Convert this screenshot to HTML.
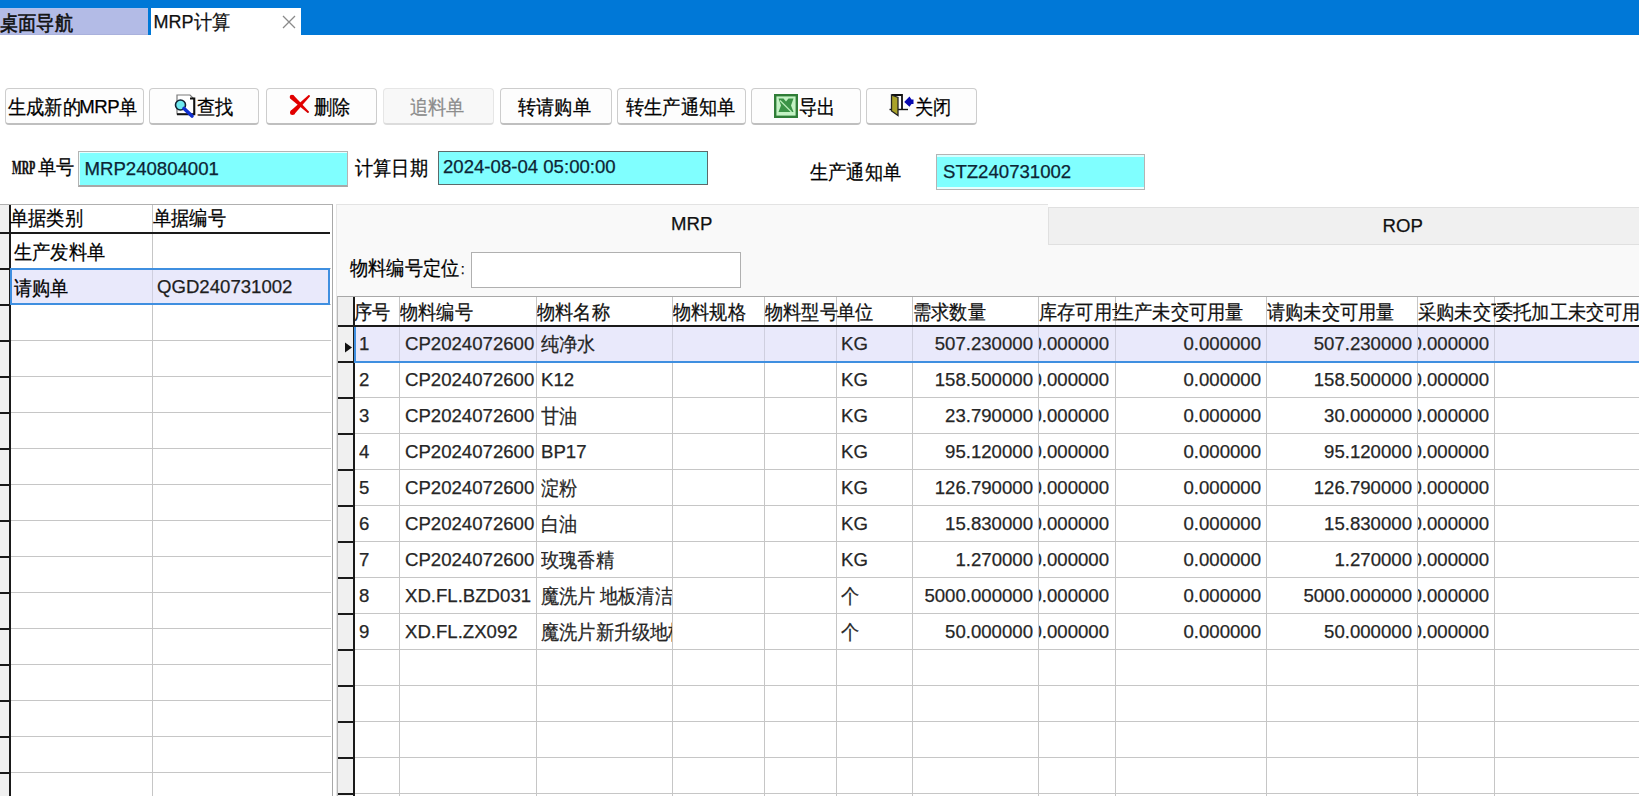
<!DOCTYPE html><html><head><meta charset="utf-8"><style>
*{box-sizing:border-box;margin:0;padding:0}
html,body{width:1639px;height:796px;overflow:hidden;background:#fff;font-family:"Liberation Sans",sans-serif;color:#000;-webkit-text-stroke:0.25px currentColor}
body{position:relative}
.a{position:absolute}
.t{position:absolute;white-space:nowrap;line-height:20px;height:20px;font-size:18.6px}
.z{display:inline-block;font-size:20px;transform:scaleX(.91);transform-origin:0 0;vertical-align:-1px}
.btn{position:absolute;top:88px;height:37px;border:1px solid #cdcdcd;border-bottom:2px solid #bfbfbf;border-radius:4px;background:#fdfdfd}
.btn.dis{border-color:#e6e6e6;border-bottom-color:#dcdcdc;background:#f8f8f8}
.inp{position:absolute;background:#80ffff}
.vl{position:absolute;width:1px;background:#c6c6c6}
.hl{position:absolute;height:1px;background:#c6c6c6}
.cell{position:absolute;white-space:nowrap;overflow:hidden;line-height:20px;height:20px;font-size:18.6px;color:#262626}
.r{display:flex;justify-content:flex-end}
</style></head><body>
<div class="a" style="left:0;top:0;width:1639px;height:35px;background:#0078d7"></div>
<div class="a" style="left:0;top:8px;width:148px;height:27px;background:#b3bbe6;border-bottom:1px solid #a9b1dc;border-top:1px solid #adc2ee"></div>
<div class="t" style="left:0px;top:12.5px;-webkit-text-stroke:0.6px #101010;color:#101010"><span class="z" style="margin-right:-8.8px">桌面导航</span></div>
<div class="a" style="left:151px;top:8px;width:150px;height:27px;background:#fff"></div>
<div class="t" style="left:153.5px;top:12px;color:#111;font-size:18px">MRP<span class="z" style="margin-right:-4.4px">计算</span></div>
<svg class="a" style="left:282px;top:15px" width="14" height="14" viewBox="0 0 14 14"><path d="M1 1L13 13M13 1L1 13" stroke="#8a8a8a" stroke-width="1.3" fill="none"/></svg>
<div class="btn" style="left:5px;width:139px"></div>
<div class="t" style="left:8px;top:97px"><span class="z" style="margin-right:-8.8px">生成新的</span><span style="letter-spacing:-0.4px">MRP</span><span class="z" style="margin-right:-2.2px">单</span></div>
<div class="btn" style="left:149px;width:110px"></div>
<svg class="a" style="left:174px;top:93px" width="22" height="26" viewBox="0 0 22 26">
<path d="M3 2H16L20 6V21H3Z" fill="#fff" stroke="#7a7a7a" stroke-width="1.2"/>
<path d="M16 5.5H20.3V21.3H3" fill="none" stroke="#111" stroke-width="2"/>
<circle cx="6.5" cy="12" r="5" fill="#6fe9ef" stroke="#123" stroke-width="1.6"/>
<path d="M10 15.5L18 23" stroke="#1030d0" stroke-width="3.6" stroke-linecap="round"/>
</svg>
<div class="t" style="left:197px;top:97px"><span class="z" style="margin-right:-4.4px">查找</span></div>
<div class="btn" style="left:266px;width:111px"></div>
<svg class="a" style="left:285px;top:90px" width="30" height="30" viewBox="0 0 30 30">
<path d="M5.43 8.68L22.38 22.66L23.62 21.34L8.57 5.32Z" fill="#e10000"/><circle cx="7" cy="7" r="2.3" fill="#e10000"/><circle cx="23" cy="22" r="0.9" fill="#c00000"/>
<path d="M23.36 5.36L5.73 20.73L9.27 24.27L24.64 6.64Z" fill="#e10000"/><circle cx="7.5" cy="22.5" r="2.5" fill="#e10000"/><circle cx="24" cy="6" r="0.9" fill="#e10000"/>
</svg>
<div class="t" style="left:314px;top:97px"><span class="z" style="margin-right:-4.4px">删除</span></div>
<div class="btn dis" style="left:383px;width:111px"></div>
<div class="t" style="left:410px;top:97px;color:#8c8c8c"><span class="z" style="margin-right:-6.6px">追料单</span></div>
<div class="btn" style="left:500px;width:112px"></div>
<div class="t" style="left:518px;top:97px"><span class="z" style="margin-right:-8.8px">转请购单</span></div>
<div class="btn" style="left:617px;width:129px"></div>
<div class="t" style="left:626px;top:97px"><span class="z" style="margin-right:-13.2px">转生产通知单</span></div>
<div class="btn" style="left:751px;width:110px"></div>
<svg class="a" style="left:774px;top:94px" width="24" height="24" viewBox="0 0 24 24">
<rect x="1.2" y="1.2" width="21.6" height="21.6" fill="#c4f2c4" stroke="#2f7d37" stroke-width="2.4"/>
<path d="M4.5 4.5H9.5L12 7.5L14.5 4.5H19.5L17 11.5L19.5 18H4.5L7 11.5Z" fill="#3b9346"/>
<path d="M6 6.5L17.5 18" stroke="#b8ecb8" stroke-width="1.3"/>
<rect x="3.5" y="18.3" width="17" height="2" fill="#c4f2c4"/>
</svg>
<div class="t" style="left:798.5px;top:97px"><span class="z" style="margin-right:-4.4px">导出</span></div>
<div class="btn" style="left:866px;width:111px"></div>
<svg class="a" style="left:889px;top:93px" width="26" height="24" viewBox="0 0 26 24">
<path d="M2.5 2H13V16.5" fill="none" stroke="#111" stroke-width="1.8"/>
<path d="M0.5 16.5H19" stroke="#111" stroke-width="1.4"/>
<path d="M2.5 2L9 4.5V22.5L2.5 18Z" fill="#a9a22a" stroke="#222" stroke-width="1.3"/>
<path d="M15.2 9L20.5 3.6L22.5 6.5H24.5V11H22.5L20.5 13.8Z" fill="#0a0ab0"/>
</svg>
<div class="t" style="left:914.5px;top:97px"><span class="z" style="margin-right:-4.4px">关闭</span></div>
<div class="t" style="left:11.5px;top:158px;font-family:'Liberation Serif',serif;font-size:19px;font-weight:bold;color:#111;-webkit-text-stroke:0.5px #111;transform:scaleX(0.54);transform-origin:0 0">MRP</div>
<div class="t" style="left:37.5px;top:157px"><span class="z" style="margin-right:-4.4px">单号</span></div>
<div class="inp" style="left:78px;top:151px;width:270px;height:36px;border:1px solid #b4b4b4;border-bottom:2px solid #a8a8a8;box-shadow:inset 1px 1px 0 #e8ffff"></div>
<div class="t" style="left:84.5px;top:158.5px;color:#0d2535">MRP240804001</div>
<div class="t" style="left:355px;top:157.5px"><span class="z" style="margin-right:-8.8px">计算日期</span></div>
<div class="inp" style="left:438px;top:151px;width:270px;height:34px;border:1px solid #5c6a6a"></div>
<div class="t" style="left:443px;top:157px;color:#0d2535">2024-08-04 05:00:00</div>
<div class="t" style="left:810px;top:162px"><span class="z" style="margin-right:-11.0px">生产通知单</span></div>
<div class="inp" style="left:936px;top:154px;width:209px;height:36px;border:1px solid #b4b4b4;box-shadow:inset 0 2px 0 #d8ffff,inset 0 -2px 0 #e8ffff"></div>
<div class="t" style="left:943px;top:162px;color:#0d2535">STZ240731002</div>
<div class="a" style="left:0;top:204px;width:333px;height:600px;border-top:1px solid #b0b0b0;border-right:1px solid #a8a8a8;background:#fff"></div>
<div class="a" style="left:0;top:205px;width:9px;height:600px;background:#f0f0f0"></div>
<div class="a" style="left:9px;top:205px;width:2px;height:600px;background:#1a1a1a"></div>
<div class="vl" style="left:152px;top:205px;height:600px"></div>
<div class="hl" style="left:11px;top:268px;width:320px"></div>
<div class="hl" style="left:11px;top:304px;width:320px"></div>
<div class="hl" style="left:11px;top:340px;width:320px"></div>
<div class="hl" style="left:11px;top:376px;width:320px"></div>
<div class="hl" style="left:11px;top:412px;width:320px"></div>
<div class="hl" style="left:11px;top:448px;width:320px"></div>
<div class="hl" style="left:11px;top:484px;width:320px"></div>
<div class="hl" style="left:11px;top:520px;width:320px"></div>
<div class="hl" style="left:11px;top:556px;width:320px"></div>
<div class="hl" style="left:11px;top:592px;width:320px"></div>
<div class="hl" style="left:11px;top:628px;width:320px"></div>
<div class="hl" style="left:11px;top:664px;width:320px"></div>
<div class="hl" style="left:11px;top:700px;width:320px"></div>
<div class="hl" style="left:11px;top:736px;width:320px"></div>
<div class="hl" style="left:11px;top:772px;width:320px"></div>
<div class="hl" style="left:11px;top:808px;width:320px"></div>
<div class="a" style="left:0;top:232px;width:9px;height:2px;background:#1a1a1a"></div>
<div class="a" style="left:0;top:268px;width:9px;height:2px;background:#1a1a1a"></div>
<div class="a" style="left:0;top:304px;width:9px;height:2px;background:#1a1a1a"></div>
<div class="a" style="left:0;top:340px;width:9px;height:2px;background:#1a1a1a"></div>
<div class="a" style="left:0;top:376px;width:9px;height:2px;background:#1a1a1a"></div>
<div class="a" style="left:0;top:412px;width:9px;height:2px;background:#1a1a1a"></div>
<div class="a" style="left:0;top:448px;width:9px;height:2px;background:#1a1a1a"></div>
<div class="a" style="left:0;top:484px;width:9px;height:2px;background:#1a1a1a"></div>
<div class="a" style="left:0;top:520px;width:9px;height:2px;background:#1a1a1a"></div>
<div class="a" style="left:0;top:556px;width:9px;height:2px;background:#1a1a1a"></div>
<div class="a" style="left:0;top:592px;width:9px;height:2px;background:#1a1a1a"></div>
<div class="a" style="left:0;top:628px;width:9px;height:2px;background:#1a1a1a"></div>
<div class="a" style="left:0;top:664px;width:9px;height:2px;background:#1a1a1a"></div>
<div class="a" style="left:0;top:700px;width:9px;height:2px;background:#1a1a1a"></div>
<div class="a" style="left:0;top:736px;width:9px;height:2px;background:#1a1a1a"></div>
<div class="a" style="left:0;top:772px;width:9px;height:2px;background:#1a1a1a"></div>
<div class="a" style="left:0;top:808px;width:9px;height:2px;background:#1a1a1a"></div>
<div class="a" style="left:9px;top:232px;width:321px;height:2px;background:#1a1a1a"></div>
<div class="t" style="left:9.5px;top:208px"><span class="z" style="margin-right:-8.8px">单据类别</span></div>
<div class="t" style="left:153px;top:208px"><span class="z" style="margin-right:-8.8px">单据编号</span></div>
<div class="t" style="left:14px;top:242px"><span class="z" style="margin-right:-11.0px">生产发料单</span></div>
<div class="a" style="left:10px;top:268px;width:320px;height:37px;background:#e9e9fb;border:2px solid #3f8fe0"></div>
<div class="vl" style="left:152px;top:270px;height:33px;background:#cfcfdf"></div>
<div class="t" style="left:14px;top:278px"><span class="z" style="margin-right:-6.6px">请购单</span></div>
<div class="t" style="left:157px;top:277px;color:#1e1e1e">QGD240731002</div>
<div class="a" style="left:336px;top:204px;width:1303px;height:600px;background:#f9f9f9;border-left:1px solid #e6e6e6;border-top:1px solid #e3e3e3"></div>
<div class="a" style="left:1048px;top:203px;width:591px;height:4px;background:#fff"></div>
<div class="a" style="left:1048px;top:207px;width:591px;height:38px;background:#f0f0f0;border:1px solid #e0e0e0;border-right:none"></div>
<div class="t" style="left:671px;top:214px;color:#111">MRP</div>
<div class="t" style="left:1382.5px;top:215.5px;color:#111">ROP</div>
<div class="t" style="left:350px;top:258px"><span class="z" style="margin-right:-13.2px">物料编号定位</span><span style="letter-spacing:0;font-size:14px;margin-left:4px">:</span></div>
<div class="a" style="left:471px;top:252px;width:270px;height:36px;background:#fff;border:1.5px solid #b0b0b0"></div>
<div class="a" style="left:337px;top:296px;width:1302px;height:510px;background:#fff;border-top:1px solid #a8a8a8;border-left:1px solid #b8b8b8"></div>
<div class="a" style="left:338px;top:297px;width:15px;height:510px;background:#f0f0f0"></div>
<div class="a" style="left:353px;top:297px;width:2px;height:510px;background:#1a1a1a"></div>
<div class="vl" style="left:399px;top:297px;height:510px"></div>
<div class="vl" style="left:536px;top:297px;height:510px"></div>
<div class="vl" style="left:672px;top:297px;height:510px"></div>
<div class="vl" style="left:764px;top:297px;height:510px"></div>
<div class="vl" style="left:836px;top:297px;height:510px"></div>
<div class="vl" style="left:912px;top:297px;height:510px"></div>
<div class="vl" style="left:1038px;top:297px;height:510px"></div>
<div class="vl" style="left:1115px;top:297px;height:510px"></div>
<div class="vl" style="left:1266px;top:297px;height:510px"></div>
<div class="vl" style="left:1417px;top:297px;height:510px"></div>
<div class="vl" style="left:1494px;top:297px;height:510px"></div>
<div class="a" style="left:353px;top:325px;width:1286px;height:2px;background:#1a1a1a"></div>
<div class="a" style="left:338px;top:325px;width:15px;height:2px;background:#1a1a1a"></div>
<div class="a" style="left:338px;top:361px;width:15px;height:2px;background:#1a1a1a"></div>
<div class="a" style="left:338px;top:397px;width:15px;height:2px;background:#1a1a1a"></div>
<div class="a" style="left:338px;top:433px;width:15px;height:2px;background:#1a1a1a"></div>
<div class="a" style="left:338px;top:469px;width:15px;height:2px;background:#1a1a1a"></div>
<div class="a" style="left:338px;top:505px;width:15px;height:2px;background:#1a1a1a"></div>
<div class="a" style="left:338px;top:541px;width:15px;height:2px;background:#1a1a1a"></div>
<div class="a" style="left:338px;top:577px;width:15px;height:2px;background:#1a1a1a"></div>
<div class="a" style="left:338px;top:613px;width:15px;height:2px;background:#1a1a1a"></div>
<div class="a" style="left:338px;top:649px;width:15px;height:2px;background:#1a1a1a"></div>
<div class="a" style="left:338px;top:685px;width:15px;height:2px;background:#1a1a1a"></div>
<div class="a" style="left:338px;top:721px;width:15px;height:2px;background:#1a1a1a"></div>
<div class="a" style="left:338px;top:757px;width:15px;height:2px;background:#1a1a1a"></div>
<div class="a" style="left:338px;top:793px;width:15px;height:2px;background:#1a1a1a"></div>
<div class="hl" style="left:355px;top:361px;width:1284px"></div>
<div class="hl" style="left:355px;top:397px;width:1284px"></div>
<div class="hl" style="left:355px;top:433px;width:1284px"></div>
<div class="hl" style="left:355px;top:469px;width:1284px"></div>
<div class="hl" style="left:355px;top:505px;width:1284px"></div>
<div class="hl" style="left:355px;top:541px;width:1284px"></div>
<div class="hl" style="left:355px;top:577px;width:1284px"></div>
<div class="hl" style="left:355px;top:613px;width:1284px"></div>
<div class="hl" style="left:355px;top:649px;width:1284px"></div>
<div class="hl" style="left:355px;top:685px;width:1284px"></div>
<div class="hl" style="left:355px;top:721px;width:1284px"></div>
<div class="hl" style="left:355px;top:757px;width:1284px"></div>
<div class="hl" style="left:355px;top:793px;width:1284px"></div>
<div class="a" style="left:354px;top:327px;width:1290px;height:36px;background:#e9e9fb;border:2px solid #3f8fe0;border-top:none"></div>
<div class="vl" style="left:399px;top:327px;height:34px;background:#cfcfdf"></div>
<div class="vl" style="left:536px;top:327px;height:34px;background:#cfcfdf"></div>
<div class="vl" style="left:672px;top:327px;height:34px;background:#cfcfdf"></div>
<div class="vl" style="left:764px;top:327px;height:34px;background:#cfcfdf"></div>
<div class="vl" style="left:836px;top:327px;height:34px;background:#cfcfdf"></div>
<div class="vl" style="left:912px;top:327px;height:34px;background:#cfcfdf"></div>
<div class="vl" style="left:1038px;top:327px;height:34px;background:#cfcfdf"></div>
<div class="vl" style="left:1115px;top:327px;height:34px;background:#cfcfdf"></div>
<div class="vl" style="left:1266px;top:327px;height:34px;background:#cfcfdf"></div>
<div class="vl" style="left:1417px;top:327px;height:34px;background:#cfcfdf"></div>
<div class="vl" style="left:1494px;top:327px;height:34px;background:#cfcfdf"></div>
<svg class="a" style="left:344px;top:342px" width="9" height="11" viewBox="0 0 9 11"><path d="M1 0.5L8 5.5L1 10.5Z" fill="#111"/></svg>
<div class="cell" style="left:354px;top:302px;width:47px;color:#111;overflow:hidden"><span class="z" style="margin-right:-4.4px">序号</span></div>
<div class="cell" style="left:400px;top:302px;width:138px;color:#111;overflow:hidden"><span class="z" style="margin-right:-8.8px">物料编号</span></div>
<div class="cell" style="left:537px;top:302px;width:137px;color:#111;overflow:hidden"><span class="z" style="margin-right:-8.8px">物料名称</span></div>
<div class="cell" style="left:673px;top:302px;width:93px;color:#111;overflow:hidden"><span class="z" style="margin-right:-8.8px">物料规格</span></div>
<div class="cell" style="left:765px;top:302px;width:73px;color:#111;overflow:hidden"><span class="z" style="margin-right:-8.8px">物料型号</span></div>
<div class="cell" style="left:837px;top:302px;width:77px;color:#111;overflow:hidden"><span class="z" style="margin-right:-4.4px">单位</span></div>
<div class="cell" style="left:913px;top:302px;width:127px;color:#111;overflow:hidden"><span class="z" style="margin-right:-8.8px">需求数量</span></div>
<div class="cell" style="left:1039px;top:302px;width:78px;color:#111;overflow:hidden"><span class="z" style="margin-right:-11.0px">库存可用量</span></div>
<div class="cell" style="left:1116px;top:302px;width:152px;color:#111;overflow:hidden"><span class="z" style="margin-right:-15.4px">生产未交可用量</span></div>
<div class="cell" style="left:1267px;top:302px;width:152px;color:#111;overflow:hidden"><span class="z" style="margin-right:-15.4px">请购未交可用量</span></div>
<div class="cell" style="left:1418px;top:302px;width:78px;color:#111;overflow:hidden"><span class="z" style="margin-right:-15.4px">采购未交可用量</span></div>
<div class="cell" style="left:1495px;top:302px;width:207px;color:#111;overflow:hidden"><span class="z" style="margin-right:-19.8px">委托加工未交可用量</span></div>
<div class="cell" style="left:359px;top:334px;width:40px">1</div>
<div class="cell" style="left:405px;top:334px;width:131px">CP2024072600</div>
<div class="cell" style="left:541px;top:334px;width:131px"><span class="z" style="margin-right:-6.6px">纯净水</span></div>
<div class="cell" style="left:841px;top:334px;width:71px">KG</div>
<div class="cell r" style="left:913px;top:334px;width:120px">507.230000</div>
<div class="cell r" style="left:1039px;top:334px;width:70px">0.000000</div>
<div class="cell r" style="left:1116px;top:334px;width:145px">0.000000</div>
<div class="cell r" style="left:1267px;top:334px;width:145px">507.230000</div>
<div class="cell r" style="left:1418px;top:334px;width:71px">0.000000</div>
<div class="cell" style="left:359px;top:370px;width:40px">2</div>
<div class="cell" style="left:405px;top:370px;width:131px">CP2024072600</div>
<div class="cell" style="left:541px;top:370px;width:131px">K12</div>
<div class="cell" style="left:841px;top:370px;width:71px">KG</div>
<div class="cell r" style="left:913px;top:370px;width:120px">158.500000</div>
<div class="cell r" style="left:1039px;top:370px;width:70px">0.000000</div>
<div class="cell r" style="left:1116px;top:370px;width:145px">0.000000</div>
<div class="cell r" style="left:1267px;top:370px;width:145px">158.500000</div>
<div class="cell r" style="left:1418px;top:370px;width:71px">0.000000</div>
<div class="cell" style="left:359px;top:406px;width:40px">3</div>
<div class="cell" style="left:405px;top:406px;width:131px">CP2024072600</div>
<div class="cell" style="left:541px;top:406px;width:131px"><span class="z" style="margin-right:-4.4px">甘油</span></div>
<div class="cell" style="left:841px;top:406px;width:71px">KG</div>
<div class="cell r" style="left:913px;top:406px;width:120px">23.790000</div>
<div class="cell r" style="left:1039px;top:406px;width:70px">0.000000</div>
<div class="cell r" style="left:1116px;top:406px;width:145px">0.000000</div>
<div class="cell r" style="left:1267px;top:406px;width:145px">30.000000</div>
<div class="cell r" style="left:1418px;top:406px;width:71px">0.000000</div>
<div class="cell" style="left:359px;top:442px;width:40px">4</div>
<div class="cell" style="left:405px;top:442px;width:131px">CP2024072600</div>
<div class="cell" style="left:541px;top:442px;width:131px">BP17</div>
<div class="cell" style="left:841px;top:442px;width:71px">KG</div>
<div class="cell r" style="left:913px;top:442px;width:120px">95.120000</div>
<div class="cell r" style="left:1039px;top:442px;width:70px">0.000000</div>
<div class="cell r" style="left:1116px;top:442px;width:145px">0.000000</div>
<div class="cell r" style="left:1267px;top:442px;width:145px">95.120000</div>
<div class="cell r" style="left:1418px;top:442px;width:71px">0.000000</div>
<div class="cell" style="left:359px;top:478px;width:40px">5</div>
<div class="cell" style="left:405px;top:478px;width:131px">CP2024072600</div>
<div class="cell" style="left:541px;top:478px;width:131px"><span class="z" style="margin-right:-4.4px">淀粉</span></div>
<div class="cell" style="left:841px;top:478px;width:71px">KG</div>
<div class="cell r" style="left:913px;top:478px;width:120px">126.790000</div>
<div class="cell r" style="left:1039px;top:478px;width:70px">0.000000</div>
<div class="cell r" style="left:1116px;top:478px;width:145px">0.000000</div>
<div class="cell r" style="left:1267px;top:478px;width:145px">126.790000</div>
<div class="cell r" style="left:1418px;top:478px;width:71px">0.000000</div>
<div class="cell" style="left:359px;top:514px;width:40px">6</div>
<div class="cell" style="left:405px;top:514px;width:131px">CP2024072600</div>
<div class="cell" style="left:541px;top:514px;width:131px"><span class="z" style="margin-right:-4.4px">白油</span></div>
<div class="cell" style="left:841px;top:514px;width:71px">KG</div>
<div class="cell r" style="left:913px;top:514px;width:120px">15.830000</div>
<div class="cell r" style="left:1039px;top:514px;width:70px">0.000000</div>
<div class="cell r" style="left:1116px;top:514px;width:145px">0.000000</div>
<div class="cell r" style="left:1267px;top:514px;width:145px">15.830000</div>
<div class="cell r" style="left:1418px;top:514px;width:71px">0.000000</div>
<div class="cell" style="left:359px;top:550px;width:40px">7</div>
<div class="cell" style="left:405px;top:550px;width:131px">CP2024072600</div>
<div class="cell" style="left:541px;top:550px;width:131px"><span class="z" style="margin-right:-8.8px">玫瑰香精</span></div>
<div class="cell" style="left:841px;top:550px;width:71px">KG</div>
<div class="cell r" style="left:913px;top:550px;width:120px">1.270000</div>
<div class="cell r" style="left:1039px;top:550px;width:70px">0.000000</div>
<div class="cell r" style="left:1116px;top:550px;width:145px">0.000000</div>
<div class="cell r" style="left:1267px;top:550px;width:145px">1.270000</div>
<div class="cell r" style="left:1418px;top:550px;width:71px">0.000000</div>
<div class="cell" style="left:359px;top:586px;width:40px">8</div>
<div class="cell" style="left:405px;top:586px;width:131px">XD.FL.BZD031</div>
<div class="cell" style="left:541px;top:586px;width:131px"><span class="z" style="margin-right:-6.6px">魔洗片</span> <span class="z" style="margin-right:-8.8px">地板清洁</span></div>
<div class="cell" style="left:841px;top:586px;width:71px"><span class="z" style="margin-right:-2.2px">个</span></div>
<div class="cell r" style="left:913px;top:586px;width:120px">5000.000000</div>
<div class="cell r" style="left:1039px;top:586px;width:70px">0.000000</div>
<div class="cell r" style="left:1116px;top:586px;width:145px">0.000000</div>
<div class="cell r" style="left:1267px;top:586px;width:145px">5000.000000</div>
<div class="cell r" style="left:1418px;top:586px;width:71px">0.000000</div>
<div class="cell" style="left:359px;top:622px;width:40px">9</div>
<div class="cell" style="left:405px;top:622px;width:131px">XD.FL.ZX092</div>
<div class="cell" style="left:541px;top:622px;width:131px"><span class="z" style="margin-right:-22.0px">魔洗片新升级地板清洁</span></div>
<div class="cell" style="left:841px;top:622px;width:71px"><span class="z" style="margin-right:-2.2px">个</span></div>
<div class="cell r" style="left:913px;top:622px;width:120px">50.000000</div>
<div class="cell r" style="left:1039px;top:622px;width:70px">0.000000</div>
<div class="cell r" style="left:1116px;top:622px;width:145px">0.000000</div>
<div class="cell r" style="left:1267px;top:622px;width:145px">50.000000</div>
<div class="cell r" style="left:1418px;top:622px;width:71px">0.000000</div>
</body></html>
